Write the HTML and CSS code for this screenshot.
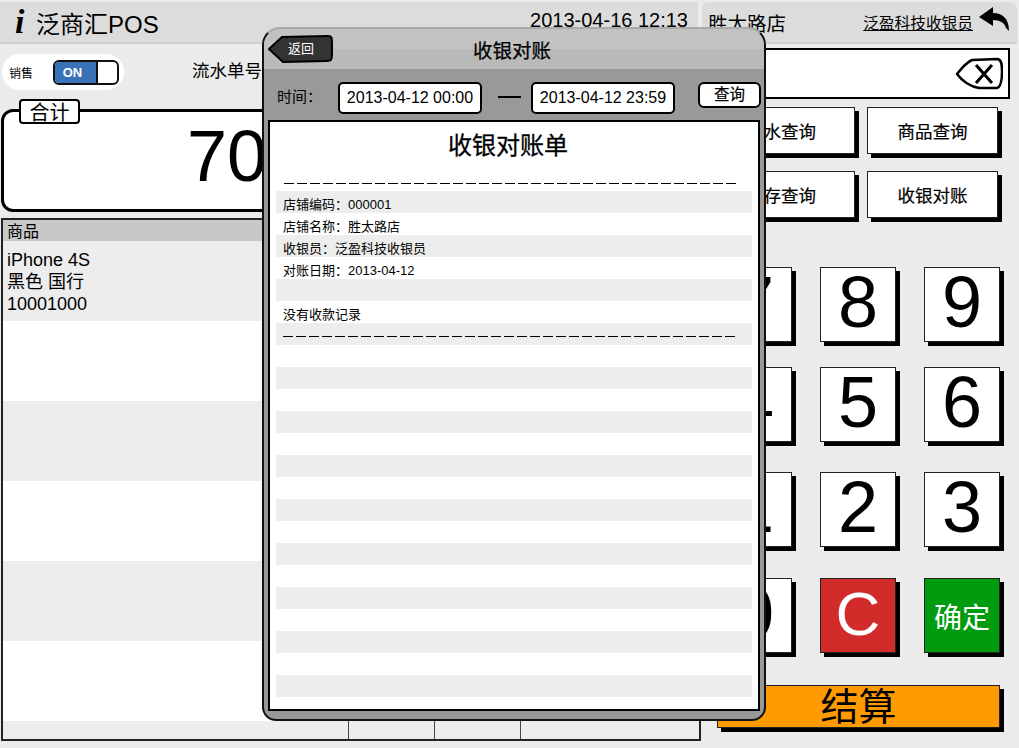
FILE: index.html
```html
<!DOCTYPE html>
<html lang="zh">
<head>
<meta charset="utf-8">
<title>泛商汇POS</title>
<link rel="stylesheet" href="styles.css">
</head>
<body>
<div class="app">
  <section class="left">
    <header class="bar left-bar">
      <span class="logo">i</span>
      <span class="brand">泛商汇POS</span>
      <span class="clock">2013-04-16 12:13</span>
    </header>
    <div class="tools">
      <div class="mode">
        <span class="mode-label">销售</span>
        <span class="toggle"><span class="toggle-on">ON</span><span class="toggle-knob"></span></span>
      </div>
      <span class="serial">流水单号：</span>
    </div>
    <div class="total">
      <span class="total-tag">合计</span>
      <span class="total-num">7000.00</span>
    </div>
    <div class="table">
      <div class="thead">商品</div>
      <div class="row alt"><span class="item">iPhone 4S<br>黑色 国行<br>10001000</span></div>
      <div class="row"></div>
      <div class="row alt"></div>
      <div class="row"></div>
      <div class="row alt"></div>
      <div class="row"></div>
      <div class="row-last"><span class="c c1"></span><span class="c"></span><span class="c"></span></div>
    </div>
  </section>
  <section class="right">
    <header class="bar right-bar">
      <span class="store">胜太路店</span>
      <span class="cashier">泛盈科技收银员</span>
      <svg class="back-arrow" width="32" height="28" viewBox="0 0 32 28"><path d="M1 12 L15 2 L15 8 C24 8 31 13 31 26 L28 23 C27 18 22 15 15 15 L15 21 Z" fill="#000"/></svg>
    </header>
    <div class="input">
      <svg width="48" height="34" viewBox="0 0 48 34"><path d="M2 17 C6 12 12 5 17 3 L42 2 C46 2 47 6 47 14 C47 24 46 30 42 31 L24 31 C16 30 7 24 2 17 Z" fill="#fff" stroke="#000" stroke-width="2.5" stroke-linejoin="round"/><path d="M21 8 L37 26 M37 8 L21 26" stroke="#000" stroke-width="3" fill="none"/></svg>
    </div>
    <div class="queries">
      <span class="q">流水查询</span><span class="q">商品查询</span>
      <span class="q">库存查询</span><span class="q">收银对账</span>
    </div>
    <div class="keys">
      <span class="k">7</span><span class="k">8</span><span class="k">9</span>
      <span class="k">4</span><span class="k">5</span><span class="k">6</span>
      <span class="k">1</span><span class="k">2</span><span class="k">3</span>
      <span class="k">0</span><span class="k red">C</span><span class="k green">确定</span>
    </div>
    <div class="pay">结算</div>
  </section>
</div>
<div class="modal">
  <div class="m-title">
    <span class="m-back">
      <svg class="m-back-shape" width="66" height="28" viewBox="0 0 66 28"><path d="M1 14 L14 2 L60 1 C64 1 64 3 64 8 L64 20 C64 25 63 26 59 26 L15 27 Z" fill="#333" stroke="#000" stroke-width="2"/></svg>
      <span class="m-back-text">返回</span>
    </span>
    <span class="m-heading">收银对账</span>
  </div>
  <div class="m-tools">
    <span class="m-label">时间：</span>
    <span class="date">2013-04-12 00:00</span>
    <span class="dash"></span>
    <span class="date">2013-04-12 23:59</span>
    <span class="m-query">查询</span>
  </div>
  <div class="receipt">
    <h1 class="r-title">收银对账单</h1>
    <div class="r-rule"></div>
    <div class="lines">
      <div class="l">店铺编码：000001</div>
      <div class="l">店铺名称：胜太路店</div>
      <div class="l">收银员：泛盈科技收银员</div>
      <div class="l">对账日期：2013-04-12</div>
      <div class="l"></div>
      <div class="l">没有收款记录</div>
      <div class="l"><div class="r-rule inner"></div></div>
      <div class="l"></div><div class="l"></div><div class="l"></div><div class="l"></div>
      <div class="l"></div><div class="l"></div><div class="l"></div><div class="l"></div>
      <div class="l"></div><div class="l"></div><div class="l"></div><div class="l"></div>
      <div class="l"></div><div class="l"></div><div class="l"></div><div class="l"></div>
    </div>
  </div>
</div>
</body>
</html>
```
FILE: styles.css
```css
* { box-sizing: border-box; }
html, body { margin: 0; padding: 0; }
body {
  width: 1019px; height: 748px; overflow: hidden; position: relative;
  background: #ebebeb; color: #000;
  font-family: "Liberation Sans", "Noto Sans CJK SC", sans-serif;
}
.app { display: flex; gap: 1px; height: 748px; padding-top: 2px; }
.left { width: 701px; flex: none; display: flex; flex-direction: column; }
.right { width: 317px; flex: none; display: flex; flex-direction: column; }

.bar { height: 42px; background: #dcdcdc; border-bottom: 2px solid #cfcfcf; display: flex; align-items: center; }
.left-bar { padding: 0 10px 0 15px; margin-right: 3px; }
.logo { font: italic bold 34px "Liberation Serif", serif; width: 21px; }
.brand { font-size: 24px; }
.clock { margin: 0 0 4px auto; font-size: 20px; }
.right-bar { padding: 0 7px 0 6px; margin-right: 2px; border-radius: 6px 6px 0 0; }
.store { font-size: 19.5px; }
.cashier { margin-left: auto; font-size: 15.7px; text-decoration: underline; }
.back-arrow { margin: -6px 0 0 5px; }

.tools { height: 40px; display: flex; align-items: center; margin-top: 8px; margin-bottom: 17px; }
.mode { width: 122px; height: 36px; background: #fff; border-radius: 18px; display: flex; align-items: center; padding-left: 7px; margin-left: 2px; }
.mode-label { font-size: 12px; width: 44px; }
.toggle { width: 66px; height: 25px; border: 2px solid #111; border-radius: 6px; display: flex; overflow: hidden; background: #fff; }
.toggle-on { width: 43px; padding-right: 6px; background: #3a72b8; color: #fff; font-size: 13px; font-weight: bold; text-align: center; line-height: 21px; border-right: 2px solid #111; }
.toggle-knob { flex: 1; }
.serial { font-size: 17.5px; margin: 0 0 6px 68px; }

.total { position: relative; height: 103px; margin: 0 4px 0 1px; background: #fff; border: 3px solid #000; border-radius: 12px; }
.total-tag { position: absolute; left: 15px; top: -13px; width: 61px; height: 25px; background: #fff; border: 2px solid #000; border-radius: 4px; text-align: center; font-size: 20px; line-height: 24px; }
.total-num { position: absolute; left: 183px; top: 5px; font-size: 72px; line-height: 78px; }

.table { margin: 6px 0 0 1px; height: 523px; background: #fff; border: 2px solid #222; display: flex; flex-direction: column; }
.thead { height: 21px; background: #c8c8c8; font-size: 16px; line-height: 23px; padding-left: 4px; flex: none; }
.row { height: 80px; flex: none; }
.alt { background: #ededed; }
.item { display: block; padding: 8px 0 0 4px; font-size: 18px; line-height: 22px; }
.row-last { height: 18px; flex: none; background: #ededed; display: flex; }
.c { width: 86px; border-left: 1px solid #444; }
.c1 { margin-left: 345px; }

.input { height: 51px; margin: 4px 9px 0 0; background: #fff; border: 2px solid #000; display: flex; align-items: center; justify-content: flex-end; padding-right: 5px; }
.queries { display: grid; grid-template-columns: 148px 131px; column-gap: 12px; row-gap: 17px; margin: 8px 0 0 5px; }
.q { height: 47px; background: #fff; border: 1px solid #222; box-shadow: 4px 4px 0 #000; display: flex; align-items: center; justify-content: center; font-size: 17.5px; -webkit-text-stroke: 0.2px #000; }
.keys { display: grid; grid-template-columns: 76px 76px 76px; grid-template-rows: 100px 105px 106px 76px; column-gap: 28px; margin: 49px 0 0 14px; }
.k { height: 75px; padding-bottom: 6px; background: #fff; border: 1px solid #222; box-shadow: 4px 4px 0 #000; display: flex; align-items: center; justify-content: center; font-size: 72px; }
.red { background: #d12c2a; color: #fff; font-size: 62px; padding-bottom: 4px; }
.green { background: #009b0e; color: #fff; font-size: 28px; padding-bottom: 0; }
.pay { height: 43px; width: 283px; margin: 31px 0 0 15px; background: #ff9a00; border: 1px solid #222; box-shadow: 4px 4px 0 #000; display: flex; align-items: center; justify-content: center; font-size: 38px; line-height: 42px; }

.modal { position: absolute; left: 262px; top: 27px; width: 504px; height: 694px; background: #999; border: 2px solid #111; border-top-color: #aaa; border-radius: 18px 18px 14px 14px; display: flex; flex-direction: column; overflow: hidden; }
.m-title { position: relative; height: 40px; flex: none; background: linear-gradient(#c2c2c2 0 50%, #b9b9b9 50%); display: flex; align-items: center; justify-content: center; }
.m-heading { font-size: 19.5px; -webkit-text-stroke: 0.25px #000; margin-right: 4px; }
.m-back { position: absolute; left: 4px; top: 6px; width: 66px; height: 28px; }
.m-back-shape { display: block; }
.m-back-text { position: absolute; left: 20px; top: 5px; color: #fff; font-size: 13px; line-height: 18px; }
.m-tools { height: 51px; flex: none; display: flex; align-items: flex-start; padding: 13px 0 0 13px; }
.m-label { font-size: 15px; width: 61px; line-height: 29px; }
.date { width: 144px; height: 32px; background: #fff; border: 2px solid #000; border-radius: 5px; font-size: 16px; line-height: 28px; text-align: center; }
.dash { width: 23px; height: 2px; background: #000; margin: 14px 10px 0 16px; }
.m-query { width: 63px; height: 26px; margin-left: 23px; background: #fff; border: 2px solid #000; border-radius: 6px; font-size: 15.5px; line-height: 22px; text-align: center; -webkit-text-stroke: 0.2px #000; }
.receipt { flex: none; height: 591px; margin: 0 4px; background: #fff; border: 2px solid #000; padding: 0 6px; }
.r-title { margin: 0; height: 46px; padding: 9px 12px 0 0; font-size: 24px; line-height: 30px; font-weight: normal; text-align: center; -webkit-text-stroke: 0.3px #000; }
.r-rule { height: 1px; width: 454px; margin: 15px 0 7px 8px; background: repeating-linear-gradient(90deg, #000 0 10px, transparent 10px 13px); }
.r-rule.inner { margin: 13px 0 0 0; }
.lines { display: flex; flex-direction: column; }
.l { height: 22px; flex: none; padding-left: 7px; font-size: 13px; line-height: 27px; }
.l:nth-child(odd) { background: #ededed; }
```
